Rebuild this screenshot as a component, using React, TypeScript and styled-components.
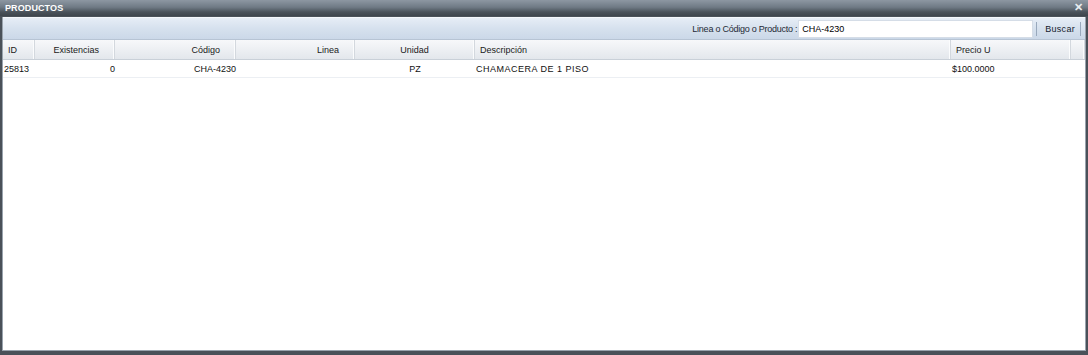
import React from "react";
import styled, { createGlobalStyle } from "styled-components";

const Global = createGlobalStyle`
  html, body { margin: 0; padding: 0; background: #3d444b; }
  body { font-family: "Liberation Sans", Arial, sans-serif; font-size: 9px; color: #000; }
`;

const Window = styled.div`
  width: 1088px;
  height: 355px;
  display: flex;
  flex-direction: column;
  background: #4a5159;
  box-sizing: border-box;
`;

const TitleBar = styled.div`
  height: 16px;
  flex: none;
  display: flex;
  align-items: center;
  justify-content: space-between;
  padding: 0 5px 0 5px;
  background: linear-gradient(#8d97a2 0%, #6f7a85 45%, #4a525a 75%, #3e454c 100%);
`;

const Title = styled.span`
  color: #fff;
  font-weight: bold;
  font-size: 9px;
  letter-spacing: 0.1px;
`;

const Close = styled.span`
  color: #e8ecf0;
  font-weight: bold;
  font-size: 11px;
  line-height: 1;
  margin-top: -1px;
`;

const Frame = styled.div`
  flex: 1;
  display: flex;
  flex-direction: column;
  margin: 1px 2px 4px 2px;
  border: 1px solid #99a3ad;
  border-top: none;
  background: #fff;
  min-height: 0;
`;

const Toolbar = styled.div`
  height: 21px;
  flex: none;
  display: flex;
  align-items: center;
  justify-content: flex-end;
  padding-right: 1px;
  background: linear-gradient(#e6edf6 0%, #d6e1ee 50%, #cbd8e8 100%);
  border-top: 1px solid #f4f7fb;
  border-bottom: 1px solid #b7c4d4;
`;

const Label = styled.span`
  color: #1f2a36;
  margin-right: 1px;
  letter-spacing: -0.25px;
`;

const SearchInput = styled.div`
  width: 235px;
  height: 18px;
  box-sizing: border-box;
  background: #fff;
  border: 1px solid #d5dde7;
  display: flex;
  align-items: center;
  padding-left: 3px;
  color: #000;
`;

const Sep = styled.span`
  width: 1px;
  height: 14px;
  background: #98a8bc;
  margin: 0 3px;
`;

const Button = styled.span`
  color: #15202c;
  padding: 0 2px 0 5px;
  letter-spacing: 0.3px;
`;

const Row = styled.div<{ $header?: boolean }>`
  display: grid;
  grid-template-columns: 32px 80px 121px 119px 120px 476px 120px 1fr;
  height: ${(p) => (p.$header ? "19px" : "17px")};
  flex: none;
  background: ${(p) => (p.$header ? "linear-gradient(#f7f8fa, #e3e7ec)" : "#fff")};
  border-bottom: 1px solid ${(p) => (p.$header ? "#c9d0d8" : "#eceff3")};
`;

const HeadCell = styled.div<{ $align?: "left" | "right" | "center" }>`
  display: flex;
  align-items: center;
  justify-content: ${(p) =>
    p.$align === "right" ? "flex-end" : p.$align === "center" ? "center" : "flex-start"};
  padding: ${(p) => (p.$align === "right" ? "0 15px 0 0" : p.$align === "center" ? "0" : "0 0 0 5px")};
  border-right: 1px solid #d3d8de;
  box-shadow: inset -1px 0 0 #fbfcfd;
  color: #1a1a1a;
  overflow: hidden;
  white-space: nowrap;
`;

const Cell = styled.div<{ $align?: "left" | "right" | "center"; $wide?: boolean }>`
  display: flex;
  align-items: center;
  justify-content: ${(p) =>
    p.$align === "right" ? "flex-end" : p.$align === "center" ? "center" : "flex-start"};
  padding: ${(p) => (p.$align === "left" ? "0 0 0 1px" : "0")};
  color: #111;
  white-space: pre;
  letter-spacing: ${(p) => (p.$wide ? "0.5px" : "0")};
  overflow: visible;
`;

const Body = styled.div`
  flex: 1;
  background: #fff;
`;

const columns: { h: string; a: "left" | "right" | "center"; da: "left" | "right" | "center" }[] = [
  { h: "ID", a: "left", da: "left" },
  { h: "Existencias", a: "right", da: "right" },
  { h: "Código", a: "right", da: "right" },
  { h: "Linea", a: "right", da: "right" },
  { h: "Unidad", a: "center", da: "center" },
  { h: "Descripción", a: "left", da: "left" },
  { h: "Precio U", a: "left", da: "left" },
  { h: "", a: "left", da: "left" },
];

const data = [["25813", "0", "CHA-4230", "", "PZ", "CHAMACERA DE 1 PISO", "$100.0000", ""]];

export default function App() {
  return (
    <>
      <Global />
      <Window>
        <TitleBar>
          <Title>PRODUCTOS</Title>
          <Close>✕</Close>
        </TitleBar>
        <Frame>
          <Toolbar>
            <Label>Linea o Código o Producto :</Label>
            <SearchInput>CHA-4230</SearchInput>
            <Sep />
            <Button>Buscar</Button>
            <Sep />
          </Toolbar>
          <Row $header>
            {columns.map((c, i) => (
              <HeadCell key={i} $align={c.a}>
                {c.h}
              </HeadCell>
            ))}
          </Row>
          {data.map((r, ri) => (
            <Row key={ri}>
              {r.map((v, i) => (
                <Cell key={i} $align={columns[i].da} $wide={i === 5}>
                  {v}
                </Cell>
              ))}
            </Row>
          ))}
          <Body />
        </Frame>
      </Window>
    </>
  );
}
